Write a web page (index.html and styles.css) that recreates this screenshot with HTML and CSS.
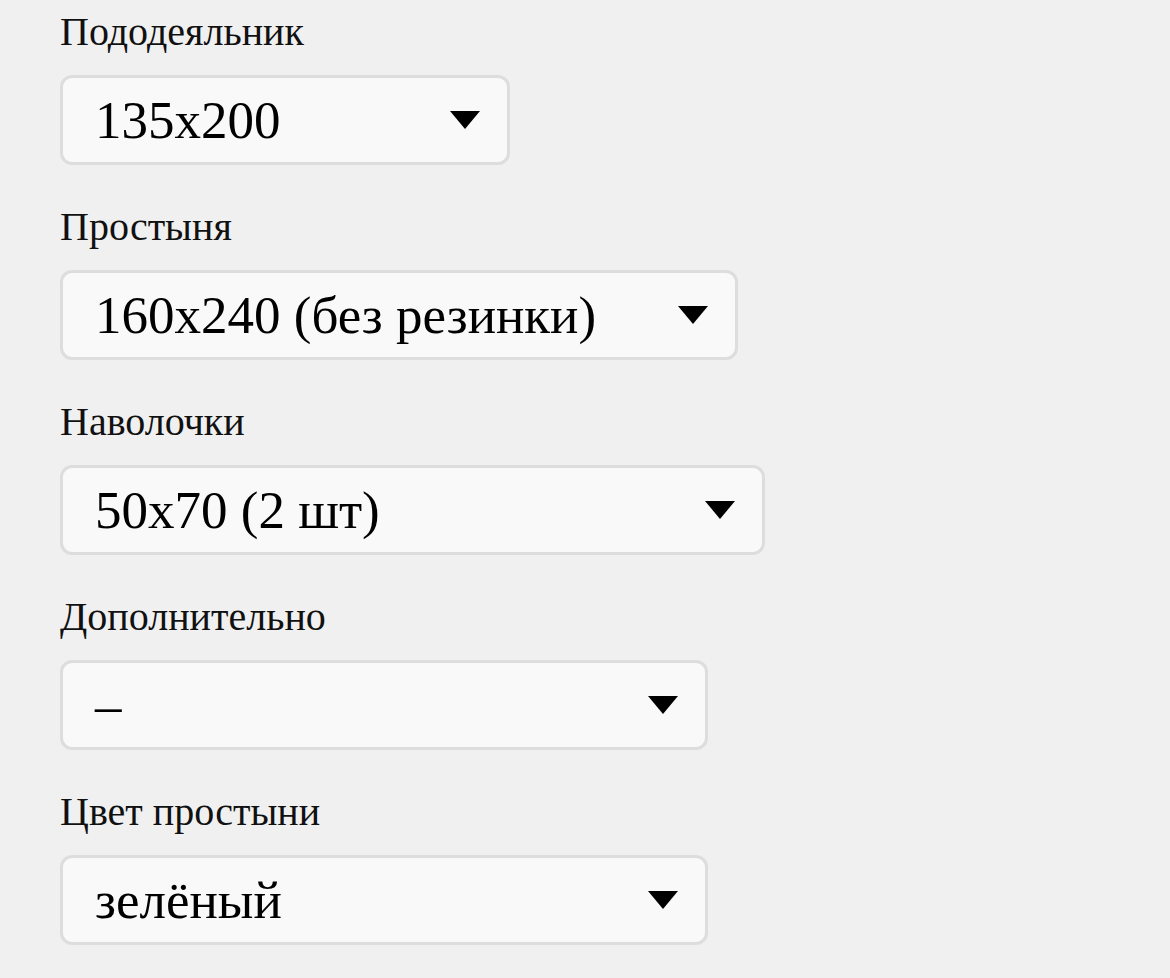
FILE: index.html
```html
<!DOCTYPE html>
<html lang="ru">
<head>
<meta charset="utf-8">
<title>Комплект</title>
<link rel="stylesheet" href="styles.css">
</head>
<body>
<div class="form">
  <div class="field">
    <div class="label">Пододеяльник</div>
    <div class="select w1"><span class="value">135x200</span><svg class="arrow" viewBox="0 0 30 18"><polygon points="0,0 30,0 15,18"/></svg></div>
  </div>
  <div class="field">
    <div class="label">Простыня</div>
    <div class="select w2"><span class="value">160x240 (без резинки)</span><svg class="arrow" viewBox="0 0 30 18"><polygon points="0,0 30,0 15,18"/></svg></div>
  </div>
  <div class="field">
    <div class="label">Наволочки</div>
    <div class="select w3"><span class="value">50x70 (2 шт)</span><svg class="arrow" viewBox="0 0 30 18"><polygon points="0,0 30,0 15,18"/></svg></div>
  </div>
  <div class="field">
    <div class="label">Дополнительно</div>
    <div class="select w4"><span class="value">–</span><svg class="arrow" viewBox="0 0 30 18"><polygon points="0,0 30,0 15,18"/></svg></div>
  </div>
  <div class="field">
    <div class="label">Цвет простыни</div>
    <div class="select w4"><span class="value">зелёный</span><svg class="arrow" viewBox="0 0 30 18"><polygon points="0,0 30,0 15,18"/></svg></div>
  </div>
</div>
</body>
</html>
```
FILE: styles.css
```css
html, body {
  margin: 0;
  padding: 0;
  background: #f0f0f0;
}
body {
  font-family: "Liberation Serif", "Times New Roman", serif;
  color: #111;
}
.form {
  padding: 10px 0 0 60px;
  display: flex;
  flex-direction: column;
  gap: 40px;
}
.field {
  display: flex;
  flex-direction: column;
  gap: 21px;
}
.label {
  font-size: 40px;
  line-height: 44px;
  height: 44px;
  white-space: nowrap;
}
.select {
  box-sizing: border-box;
  height: 90px;
  border: 3px solid #dddddd;
  border-radius: 12px;
  background: #f9f9f9;
  display: flex;
  align-items: center;
  justify-content: space-between;
  padding: 0 27px 0 32px;
}
.value {
  font-size: 53px;
  line-height: 1;
  color: #000;
  white-space: nowrap;
}
.arrow {
  width: 30px;
  height: 18px;
  fill: #000;
  flex: none;
}
.w1 { width: 450px; }
.w2 { width: 678px; }
.w3 { width: 705px; }
.w4 { width: 648px; }
```
